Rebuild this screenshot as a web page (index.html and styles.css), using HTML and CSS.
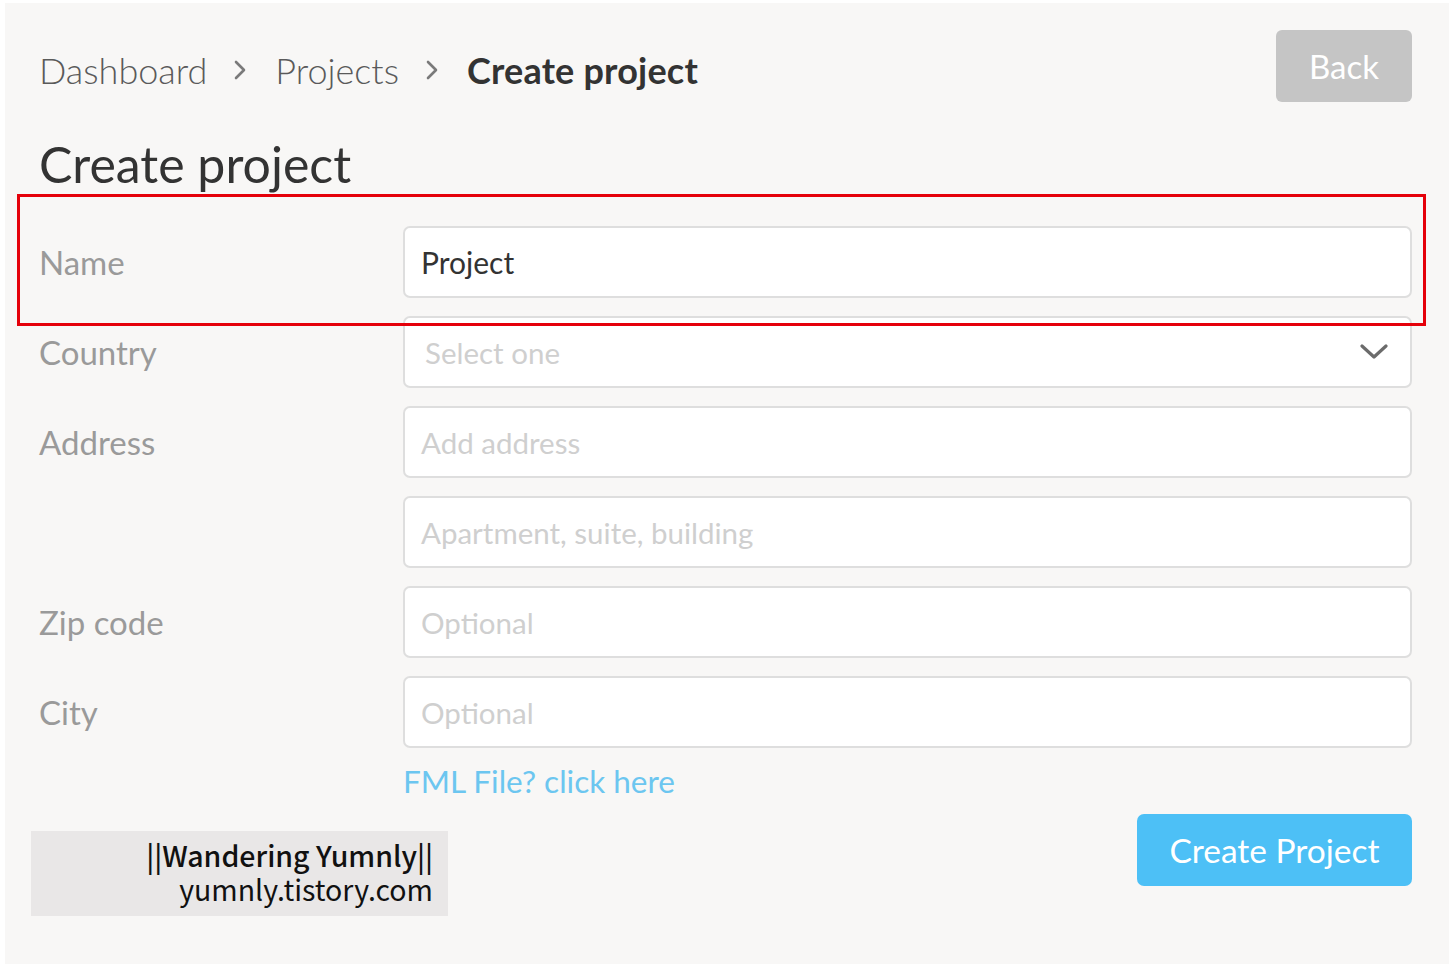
FILE: index.html
```html
<!DOCTYPE html>
<html lang="en">
<head>
<meta charset="utf-8">
<title>Create project</title>
<link rel="stylesheet" href="styles.css">
</head>
<body>
<div class="page">
  <header class="topbar">
    <nav class="crumbs">
      <span class="crumb">Dashboard</span>
      <svg class="sep" width="14" height="22" viewBox="0 0 14 22"><path d="M3 3 L11 11 L3 19" fill="none" stroke="#7a7a7a" stroke-width="2.6" stroke-linecap="round" stroke-linejoin="round"/></svg>
      <span class="crumb">Projects</span>
      <svg class="sep" width="14" height="22" viewBox="0 0 14 22"><path d="M3 3 L11 11 L3 19" fill="none" stroke="#7a7a7a" stroke-width="2.6" stroke-linecap="round" stroke-linejoin="round"/></svg>
      <span class="crumb current">Create project</span>
    </nav>
    <button class="btn-back">Back</button>
  </header>

  <h1 class="title">Create project</h1>

  <form class="form">
    <div class="highlight"></div>
    <label class="label">Name</label>
    <div class="field"><span class="value">Project</span></div>

    <label class="label">Country</label>
    <div class="field select"><span class="ph ph-select">Select one</span>
      <svg class="chev" width="28" height="16" viewBox="0 0 28 16"><path d="M2 2 L14 13 L26 2" fill="none" stroke="#6b6b6b" stroke-width="3.2" stroke-linecap="round" stroke-linejoin="round"/></svg>
    </div>

    <label class="label">Address</label>
    <div class="field"><span class="ph">Add address</span></div>

    <span class="label"></span>
    <div class="field"><span class="ph">Apartment, suite, building</span></div>

    <label class="label">Zip code</label>
    <div class="field"><span class="ph">Optional</span></div>

    <label class="label">City</label>
    <div class="field"><span class="ph">Optional</span></div>

    <span class="label"></span>
    <a class="link">FML File? click here</a>
  </form>

  <div class="bottom">
    <div class="watermark">
      <div class="wm-name">||Wandering Yumnly||</div>
      <div class="wm-url">yumnly.tistory.com</div>
    </div>
    <button class="btn-create">Create Project</button>
  </div>
</div>
</body>
</html>
```

FILE: styles.css
```css
html, body {
  margin: 0;
  padding: 0;
  background: #ffffff;
}
body {
  font-family: Lato, "Noto Sans", sans-serif;
  height: 964px;
  overflow: hidden;
}
.page {
  margin-left: 5px;
  margin-top: 3px;
  height: 961px;
  background: #f8f7f6;
  padding: 27px 37px 0 34px;
  box-sizing: border-box;
}
.topbar {
  display: flex;
  justify-content: space-between;
  align-items: center;
  height: 72px;
}
.crumbs {
  display: flex;
  align-items: center;
  font-size: 36px;
  color: #555;
  margin-top: 8px;
}
.crumb {
  font-weight: 300;
  color: #5a5a5a;
}
.crumb.current {
  font-weight: 700;
  color: #333;
  letter-spacing: 0.2px;
}
.sep {
  margin: 0 28px 0 26px;
}
.btn-back {
  width: 136px;
  height: 72px;
  border: none;
  border-radius: 6px;
  background: #c5c5c5;
  color: #fff;
  font-family: Lato, sans-serif;
  font-size: 33px;
  padding: 0;
}
.title {
  margin: 32px 0 0 0;
  font-size: 50px;
  font-weight: 400;
  color: #333;
  line-height: 60px;
}
.form {
  position: relative;
  margin-top: 32px;
  display: grid;
  grid-template-columns: 364px 1fr;
  grid-auto-rows: 72px;
  row-gap: 18px;
  align-items: center;
}
.highlight {
  position: absolute;
  left: -22px;
  top: -32px;
  width: 1409px;
  height: 132px;
  border: 3px solid #e5000a;
  box-sizing: border-box;
  pointer-events: none;
  z-index: 2;
}
.label {
  font-size: 33px;
  color: #9a9a9a;
}
.field {
  height: 72px;
  box-sizing: border-box;
  border: 2px solid #dedede;
  border-radius: 7px;
  background: #fff;
  display: flex;
  align-items: center;
  padding: 0 16px;
  font-size: 30px;
}
.value {
  color: #333;
}
.ph {
  color: #cfcfcf;
  font-size: 29.5px;
}
.ph-select {
  padding-left: 4px;
}
.select {
  justify-content: space-between;
  padding-right: 22px;
}
.link {
  font-size: 31.5px;
  color: #6cc6f0;
  align-self: start;
  margin-top: -4px;
}
.bottom {
  display: flex;
  justify-content: space-between;
  align-items: flex-start;
  margin-top: -24px;
}
.watermark {
  margin-left: -8px;
  margin-top: 17px;
  width: 417px;
  height: 85px;
  box-sizing: border-box;
  background: #e9e7e7;
  padding: 7px 15px 0 0;
  text-align: right;
  font-family: "Noto Sans CJK KR", "Open Sans", sans-serif;
  color: #111;
  font-size: 28.5px;
  line-height: 34px;
}
.wm-name {
  font-weight: 500;
}
.btn-create {
  width: 275px;
  height: 72px;
  border: none;
  border-radius: 7px;
  background: #4dc0f6;
  color: #fff;
  font-family: Lato, sans-serif;
  font-size: 33.5px;
  padding: 0;
}
```
